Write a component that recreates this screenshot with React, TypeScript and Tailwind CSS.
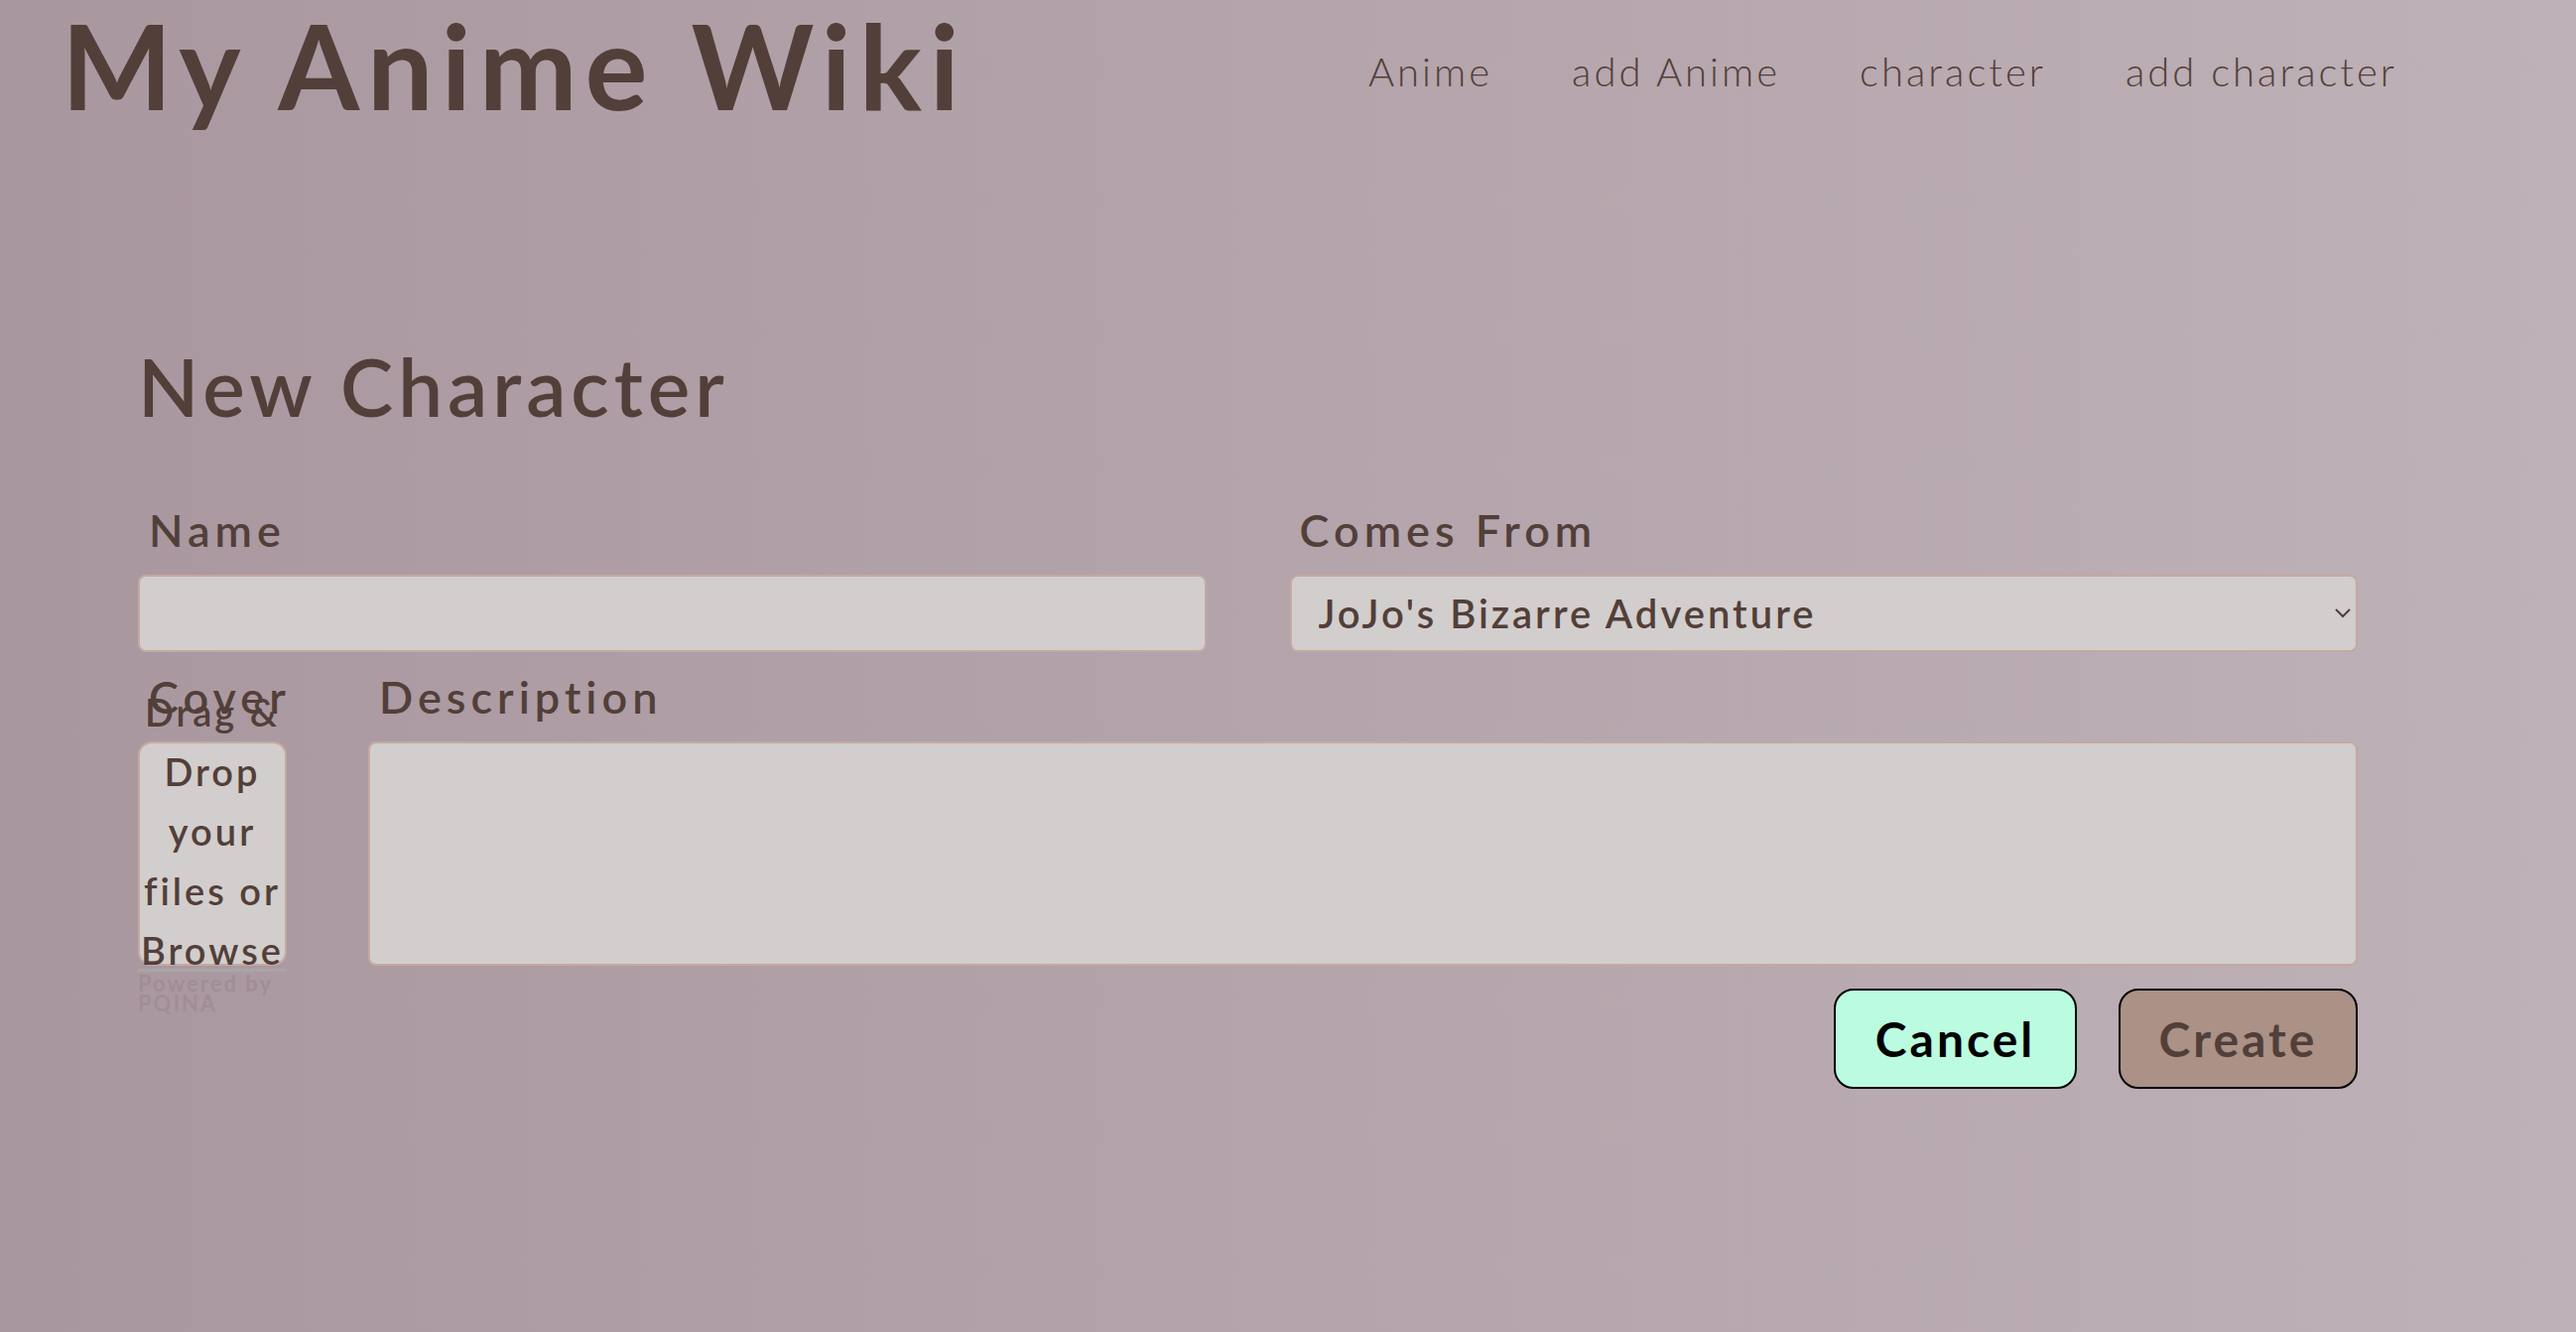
import { useState } from "react";

const links = ["Anime", "add Anime", "character", "add character"];

const App = () => {
  const [name, setName] = useState("");
  const [desc, setDesc] = useState("");

  return (
    <div
      className="min-h-screen w-full bg-linear-to-r from-[#a9979f] to-[#beb1b7] text-[#523f39]"
      style={{ fontFamily: "Lato, 'Noto Sans', sans-serif" }}
    >
      {/* header */}
      <header className="flex items-start justify-between pl-[62px] pr-[180px] h-[140px]">
        <h1 className="mt-[7px] text-[118px] leading-none font-bold tracking-[8px]">My Anime Wiki</h1>
        <nav className="mt-[52px] flex gap-[80px] text-[40px] leading-none font-light tracking-[3px]">
          {links.map((l) => (
            <a key={l} href="#" className="hover:underline">
              {l}
            </a>
          ))}
        </nav>
      </header>

      <main className="pl-[139px] pr-[220px] pt-[209px]">
        <h2 className="text-[80px] leading-none font-semibold tracking-[5px]">New Character</h2>

        <div className="mt-[83px] grid grid-cols-2 gap-x-[84px]">
          <div className="flex flex-col">
            <label className="pl-[11px] text-[45px] leading-none font-semibold tracking-[5px]">Name</label>
            <input
              value={name}
              onChange={(e) => setName(e.target.value)}
              className="mt-[22px] h-[78px] rounded-[8px] border-2 border-[#c4aaa0] bg-[#d2cecd] px-[27px] text-[40px] outline-none"
            />
          </div>
          <div className="flex flex-col">
            <label className="pl-[10px] text-[45px] leading-none font-semibold tracking-[5px]">Comes From</label>
            <div className="relative mt-[22px]">
              <select className="h-[78px] w-full appearance-none rounded-[8px] border-2 border-[#c4aaa0] bg-[#d2cecd] pl-[27px] text-[40px] font-semibold tracking-[3px] text-[#523f39] outline-none">
                <option>JoJo's Bizarre Adventure</option>
                <option>Naruto</option>
                <option>One Piece</option>
              </select>
              <svg
                className="pointer-events-none absolute right-[7px] top-[34px]"
                width="16"
                height="10"
                viewBox="0 0 16 10"
                fill="none"
                stroke="#523f39"
                strokeWidth="2"
              >
                <path d="M1 1l7 7 7-7" />
              </svg>
            </div>
          </div>
        </div>

        <div className="mt-[23px] flex gap-[82px]">
          <div className="flex w-[150px] flex-col">
            <label className="pl-[11px] text-[45px] leading-none font-semibold tracking-[5px]">Cover</label>
            <div className="relative mt-[22px] h-[226px] rounded-[14px] border-2 border-[#c4aaa0] bg-[#d2cecd]">
              <div className="absolute inset-x-[-6px] top-[-62px] text-center text-[38px] leading-[60px] font-semibold tracking-[3px] whitespace-nowrap">
                Drag &amp;
                <br />
                Drop
                <br />
                your
                <br />
                files or
                <br />
                <span>Browse</span>
              </div>
            </div>
            <div className="mt-[3px] h-[3px] w-full bg-[#a9a5a6]" />
            <div className="mt-[2px] text-[22px] leading-[20px] font-bold tracking-[2px] text-[#a08e96]">
              Powered by
              <br />
              PQINA
            </div>
          </div>
          <div className="flex flex-1 flex-col">
            <label className="pl-[11px] text-[45px] leading-none font-semibold tracking-[5px]">Description</label>
            <textarea
              value={desc}
              onChange={(e) => setDesc(e.target.value)}
              className="mt-[22px] h-[226px] resize-none rounded-[8px] border-2 border-[#c4aaa0] bg-[#d2cecd] p-4 text-[36px] outline-none"
            />
          </div>
        </div>

        <div className="-mt-[25px] flex justify-end gap-[42px]">
          <button className="h-[101px] w-[245px] rounded-[20px] border-2 border-black bg-[#bbfce0] text-[48px] font-bold tracking-[3px] text-black">
            Cancel
          </button>
          <button className="h-[101px] w-[241px] rounded-[20px] border-2 border-black bg-[#ab9186] text-[48px] font-bold tracking-[3px] text-[#523f39]">
            Create
          </button>
        </div>
      </main>
    </div>
  );
};

export default App;
